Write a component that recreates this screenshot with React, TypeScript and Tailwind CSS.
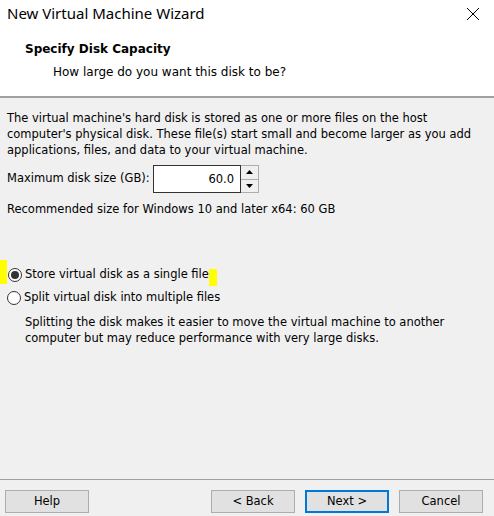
import { useState } from "react";

const body = { fontFamily: "Tahoma, 'DejaVu Sans', sans-serif" };

const WizardButton = ({ label, primary }: { label: string; primary?: boolean }) => (
    <button
        className={`h-[23px] w-[84px] bg-[#e1e1e1] text-[11.5px] text-black ${
            primary ? "border-2 border-[#0078d7]" : "border border-[#adadad]"
        }`}
        style={body}>
        {label}
    </button>
);

const Radio = ({ checked, label, onClick }: { checked: boolean; label: string; onClick: () => void }) => (
    <label className="flex h-[16px] items-center gap-[3px] cursor-default" onClick={onClick}>
        <span className="flex h-[14px] w-[14px] items-center justify-center rounded-full border border-[#333] bg-white">
            {checked && <span className="h-[8px] w-[8px] rounded-full bg-[#333]" />}
        </span>
        <span>{label}</span>
    </label>
);

const App = () => {
    const [single, setSingle] = useState(true);
    const [size, setSize] = useState("60.0");

    return (
        <div className="flex h-[516px] w-[494px] flex-col bg-[#f0f0f0] text-[11.5px] text-black" style={body}>
            <div className="bg-white">
                <div className="flex h-[30px] items-center justify-between pb-[3px] pl-[7px] pr-[14px]">
                    <span className="text-[15px]" style={{ fontFamily: "'Noto Sans', sans-serif" }}>New Virtual Machine Wizard</span>
                    <svg width="14" height="14" viewBox="0 0 14 14">
                        <path d="M1 1L13 13M13 1L1 13" stroke="#000" strokeWidth="1" />
                    </svg>
                </div>
                <div className="h-[66px] pl-[25px] pt-[10px] text-[12px]">
                    <div className="font-bold">Specify Disk Capacity</div>
                    <div className="mt-[5px] pl-[28px]">How large do you want this disk to be?</div>
                </div>
            </div>
            <div className="h-[2px] bg-[#a0a0a0]" />

            <div className="flex-1 pl-[7px] pt-[12px]">
                <p className="leading-[16px]">
                    The virtual machine's hard disk is stored as one or more files on the host computer's physical disk. These file(s) start small and become larger as you add applications, files, and data to your virtual machine.
                </p>
                <div className="mt-[7px] flex items-center">
                    <span className="w-[146px] whitespace-nowrap">Maximum disk size (GB):</span>
                    <input
                        value={size}
                        onChange={e => setSize(e.target.value)}
                        className="h-[28px] w-[88px] border border-[#333] bg-white px-[6px] text-right text-[11.5px] outline-none"
                        style={body}
                    />
                    <div className="flex h-[28px] w-[18px] flex-col border border-l-0 border-[#adadad] bg-[#f0f0f0]">
                        <button className="flex flex-1 items-center justify-center border-b border-[#adadad]">
                            <svg width="7" height="4" viewBox="0 0 7 4"><path d="M0 4L3.5 0L7 4Z" fill="#000" /></svg>
                        </button>
                        <button className="flex flex-1 items-center justify-center">
                            <svg width="7" height="4" viewBox="0 0 7 4"><path d="M0 0L3.5 4L7 0Z" fill="#000" /></svg>
                        </button>
                    </div>
                </div>
                <p className="mt-[8px] leading-[16px]">Recommended size for Windows 10 and later x64: 60 GB</p>

                <div className="relative mt-[50px] -ml-[7px]">
                    <div className="absolute left-0 top-[-7px] h-[24px] w-[7px] bg-[#ffff00]" />
                    <div className="absolute left-[209px] top-[2px] h-[17px] w-[8px] bg-[#ffff00]" />
                    <div className="pl-[8px]">
                        <Radio checked={single} label="Store virtual disk as a single file" onClick={() => setSingle(true)} />
                    </div>
                </div>
                <div className="mt-[7px]">
                    <Radio checked={!single} label="Split virtual disk into multiple files" onClick={() => setSingle(false)} />
                </div>
                <p className="mt-[8px] pl-[18px] leading-[16px]">
                    Splitting the disk makes it easier to move the virtual machine to another computer but may reduce performance with very large disks.
                </p>
            </div>

            <div className="h-px bg-[#a0a0a0]" />
            <div className="flex pb-[3px] pl-[5px] pr-[11px] pt-[10px]">
                <WizardButton label="Help" />
                <div className="ml-auto flex gap-[10px]">
                    <WizardButton label="< Back" />
                    <WizardButton label="Next >" primary />
                    <WizardButton label="Cancel" />
                </div>
            </div>
        </div>
    );
};

export default App;
